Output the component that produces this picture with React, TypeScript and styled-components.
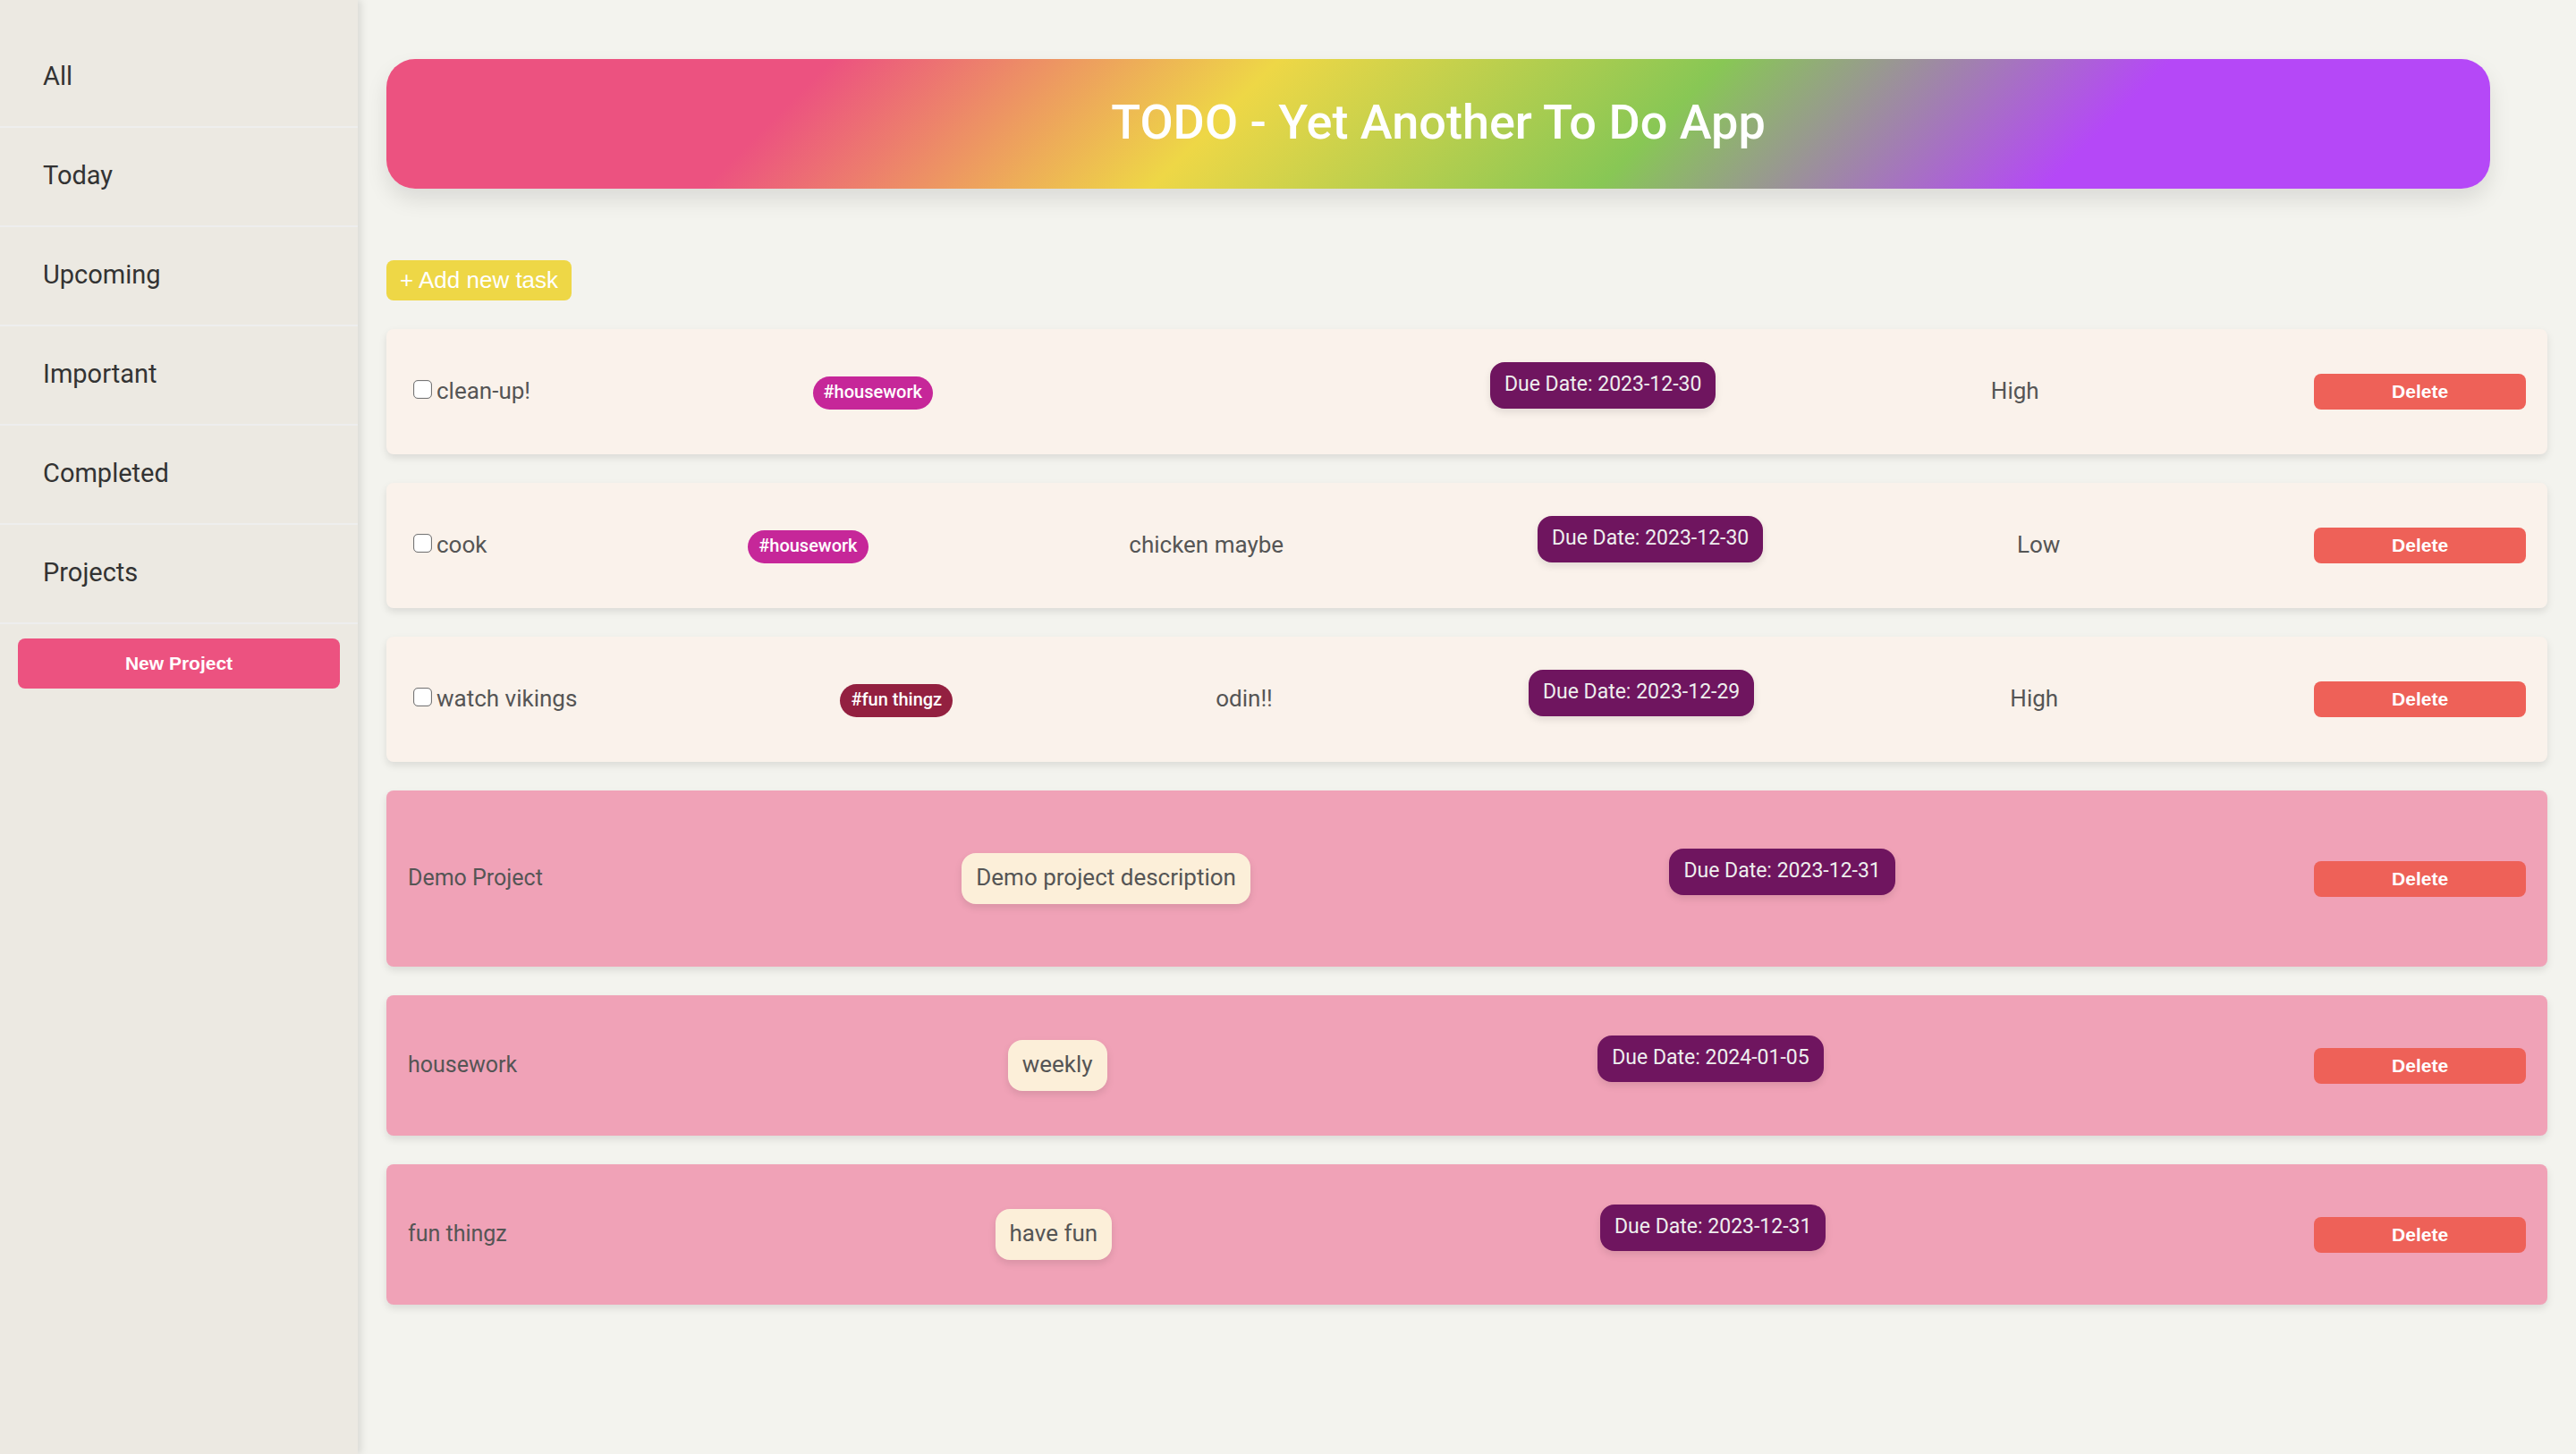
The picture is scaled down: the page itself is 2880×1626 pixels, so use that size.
import React from "react";
import styled, { createGlobalStyle } from "styled-components";

const GlobalStyle = createGlobalStyle`
  *, *::before, *::after { box-sizing: border-box; }
  body {
    margin: 0;
    background: #f3f3ee;
    color: #555;
    font-family: Roboto, "Liberation Sans", sans-serif;
  }
`;

const Layout = styled.div`
  display: grid;
  grid-template-columns: 400px minmax(0, 1fr);
  min-height: 100vh;
`;

const Sidebar = styled.aside`
  padding-top: 32px;
  background: #ece9e2;
  box-shadow: 4px 0 8px rgba(0, 0, 0, 0.1);
`;

const NavList = styled.ul`
  margin: 0;
  padding: 0;
  list-style: none;
`;

const NavItem = styled.li`
  border-bottom: 2px solid #eee;
`;

const NavLink = styled.a`
  display: block;
  padding: 33px 48px 36px;
  color: #333;
  font-size: 29px;
  line-height: 40px;
  text-decoration: none;
`;

const Button = styled.button`
  border: 0;
  border-radius: 8px;
  color: #fff;
  font-family: "Liberation Sans", Arial, sans-serif;
  font-weight: 700;
  font-size: 21px;
  line-height: 24px;
  cursor: pointer;
`;

const NewProjectButton = styled(Button)`
  display: block;
  width: calc(100% - 40px);
  margin: 16px 20px;
  padding: 16px;
  background: #ec5280;
`;

const AddTaskButton = styled(Button)`
  align-self: flex-start;
  margin: 80px 0 32px;
  padding: 8px 15px;
  background: #eed746;
  font-size: 26px;
  font-weight: 400;
  line-height: 29px;
`;

const DeleteButton = styled(Button)`
  width: 10%;
  padding: 8px;
  background: #ee6158;
`;

const Main = styled.main`
  display: flex;
  flex-direction: column;
  padding: 66px 32px 32px;
`;

const Banner = styled.header`
  margin-right: 64px;
  padding: 32px;
  border-radius: 32px;
  background: linear-gradient(135deg, #ec5280 20%, #eed746 40%, #88c755 60%, #b548f7 80%);
  box-shadow: 0 12px 24px rgba(0, 0, 0, 0.1);
  text-align: center;
`;

const Title = styled.h1`
  margin: 0;
  padding-bottom: 4px;
  color: #fff;
  font-size: 54px;
  font-weight: 500;
  line-height: 77px;
`;

const List = styled.ul`
  display: flex;
  flex-direction: column;
  gap: 32px;
  margin: 0;
  padding: 0;
  list-style: none;
`;

const Card = styled.li<{ $kind: "task" | "project"; $tall?: boolean }>`
  display: flex;
  align-items: center;
  justify-content: space-between;
  min-height: ${(p) => (p.$tall ? 197 : p.$kind === "project" ? 157 : 140)}px;
  padding: 16px 24px;
  border-radius: 8px;
  background: ${(p) => (p.$kind === "project" ? "#f0a2b7" : "#faf2eb")};
  box-shadow: 0 4px 8px rgba(0, 0, 0, 0.1);
  font-size: 26px;
  line-height: 32px;
`;

const TaskLabel = styled.label`
  display: flex;
  align-items: center;
  gap: 5px;
  padding-bottom: 3px;
`;

const Checkbox = styled.input`
  appearance: none;
  width: 21px;
  height: 21px;
  margin: 0 0 3px 6px;
  border: 1px solid #767676;
  border-radius: 5px;
  background: #fff;
  box-shadow: inset 0 0 1px #767676;

  &:checked { background: #6f155f; }
`;

const Tag = styled.span<{ $color: string }>`
  margin: 3px 8px 0;
  padding: 5px 12px 7px;
  border-radius: 20px;
  background: ${(p) => p.$color};
  color: #fff;
  font-size: 20px;
  font-weight: 500;
  line-height: 25px;
`;

const Text = styled.span`
  padding-bottom: 3px;
`;

const ProjectName = styled.span`
  padding-bottom: 2px;
  font-size: 25px;
`;

const Pill = styled.span`
  border-radius: 16px;
  box-shadow: 0 4px 8px rgba(0, 0, 0, 0.1);
`;

const DueDate = styled(Pill)`
  margin-bottom: 15px;
  padding: 9px 16px 11px;
  background: #6f155f;
  color: #eee;
  font-size: 23px;
`;

const Description = styled(Pill)`
  padding: 11px 16px 14px;
  background: #fcefd9;
`;

const views = ["All", "Today", "Upcoming", "Important", "Completed", "Projects"];

const tasks = [
  { name: "clean-up!", tag: "#housework", color: "#c62799", note: "", due: "2023-12-30", priority: "High" },
  { name: "cook", tag: "#housework", color: "#c62799", note: "chicken maybe", due: "2023-12-30", priority: "Low" },
  { name: "watch vikings", tag: "#fun thingz", color: "#932040", note: "odin!!", due: "2023-12-29", priority: "High" },
];

const projects = [
  { name: "Demo Project", note: "Demo project description", due: "2023-12-31", tall: true },
  { name: "housework", note: "weekly", due: "2024-01-05", tall: false },
  { name: "fun thingz", note: "have fun", due: "2023-12-31", tall: false },
];

export default function App() {
  return (
    <>
      <GlobalStyle />
      <Layout>
        <Sidebar>
          <nav>
            <NavList>
              {views.map((view) => (
                <NavItem key={view}>
                  <NavLink href={`#${view.toLowerCase()}`}>{view}</NavLink>
                </NavItem>
              ))}
            </NavList>
          </nav>
          <NewProjectButton type="button">New Project</NewProjectButton>
        </Sidebar>
        <Main>
          <Banner>
            <Title>TODO - Yet Another To Do App</Title>
          </Banner>
          <AddTaskButton type="button">+ Add new task</AddTaskButton>
          <List>
            {tasks.map((task) => (
              <Card key={task.name} $kind="task">
                <TaskLabel>
                  <Checkbox type="checkbox" />
                  {task.name}
                </TaskLabel>
                <Tag $color={task.color}>{task.tag}</Tag>
                <Text>{task.note}</Text>
                <DueDate>Due Date: {task.due}</DueDate>
                <Text>{task.priority}</Text>
                <DeleteButton type="button">Delete</DeleteButton>
              </Card>
            ))}
            {projects.map((project) => (
              <Card key={project.name} $kind="project" $tall={project.tall}>
                <ProjectName>{project.name}</ProjectName>
                <Description>{project.note}</Description>
                <DueDate>Due Date: {project.due}</DueDate>
                <DeleteButton type="button">Delete</DeleteButton>
              </Card>
            ))}
          </List>
        </Main>
      </Layout>
    </>
  );
}
